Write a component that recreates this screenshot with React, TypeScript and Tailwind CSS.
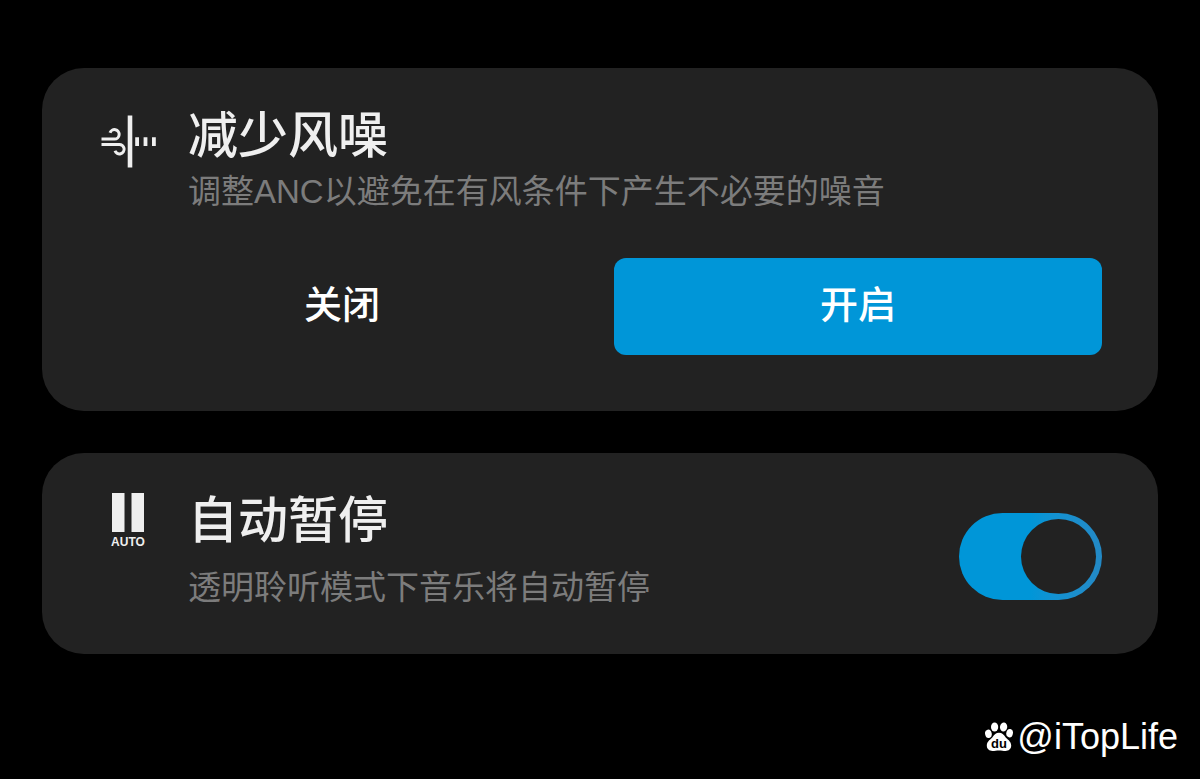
import { useState } from "react";
import type { ReactNode } from "react";

function WindIcon() {
  return (
    <svg viewBox="0 0 60 56" className="h-14 w-15" fill="none" stroke="#efefef" aria-hidden="true">
      <path d="M3.500 26H16.500A4.700 4.700 0 1 0 12 19.800" strokeWidth="3" />
      <path d="M3.500 31.500H21A4.700 4.700 0 1 1 17 37.800" strokeWidth="3" />
      <path d="M32 2.500V54.500" strokeWidth="4.600" />
      <path d="M37.200 28.700H41M45.600 28.700H49.400M54 28.700H57.800" strokeWidth="8.800" />
    </svg>
  );
}

function AutoPauseIcon() {
  return (
    <div className="flex flex-col items-center gap-1" aria-hidden="true">
      <svg viewBox="0 0 33 39" className="h-[39px] w-[33px]" fill="#efefef">
        <rect width="12.5" height="39" />
        <rect x="19.5" width="12.5" height="39" />
      </svg>
      <span className="text-xs leading-3 font-bold">AUTO</span>
    </div>
  );
}

function PawLogo() {
  return (
    <svg viewBox="0 0 28 30" className="h-[30px] w-7" fill="#fff" aria-hidden="true">
      <ellipse cx="9.6" cy="5" rx="3.6" ry="4.6" />
      <ellipse cx="18.6" cy="5" rx="3.6" ry="4.6" transform="rotate(8 18.6 5)" />
      <ellipse cx="3.4" cy="11.8" rx="3.3" ry="4.200" transform="rotate(-12 3.4 11.8)" />
      <ellipse cx="24.600" cy="11.200" rx="3.3" ry="4.200" transform="rotate(12 24.6 11.2)" />
      <path d="M14 10.800c3 0 4.800 1.800 6.200 4 1.600 2.400 6 4.300 6 8.800 0 3.700-2.700 5.400-5.600 5.400-2.300 0-4.100-.6-6.600-.6s-4.300.6-6.600.6c-2.900 0-5.600-1.700-5.600-5.400 0-4.500 4.400-6.400 6-8.800 1.400-2.200 3.200-4 6.200-4z" />
      <text x="14" y="26" textAnchor="middle" fill="#000" className="font-['Liberation_Sans',sans-serif] text-[13px] font-bold">
        du
      </text>
    </svg>
  );
}

function Card({ icon, children }: { icon: ReactNode; children: ReactNode }) {
  return (
    <section className="grid grid-cols-[60px_1fr] gap-x-[30px] rounded-[42px] bg-[#222222] px-14 pt-[38px]">
      <div className="flex justify-center">{icon}</div>
      {children}
    </section>
  );
}

export default function App() {
  const [reduceWind, setReduceWind] = useState(true);
  const [autoPause, setAutoPause] = useState(true);
  const option = "h-[97px] cursor-pointer rounded-xl pb-[3px] text-[38px] font-medium text-white";

  return (
    <div className="flex min-h-screen flex-col bg-black font-['Liberation_Sans','Noto_Sans_CJK_SC',sans-serif] text-[#efefef]">
      <main className="flex flex-col gap-[42px] px-[42px] pt-[68px]">
        <Card icon={<div className="pt-[7px]"><WindIcon /></div>}>
          <div>
            <h2 className="text-[50px] leading-[60px] font-medium">减少风噪</h2>
            <p className="text-[33px] leading-[52px] text-[#7c7c7c]">调整ANC以避免在有风条件下产生不必要的噪音</p>
          </div>
          <div role="group" aria-label="减少风噪" className="col-span-2 mt-10 grid grid-cols-2 gap-7 pb-14">
            <button
              type="button"
              aria-pressed={!reduceWind}
              onClick={() => setReduceWind(false)}
              className={`${option} ${reduceWind ? "" : "bg-[#0096d8]"}`}
            >
              关闭
            </button>
            <button
              type="button"
              aria-pressed={reduceWind}
              onClick={() => setReduceWind(true)}
              className={`${option} ${reduceWind ? "bg-[#0096d8]" : ""}`}
            >
              开启
            </button>
          </div>
        </Card>

        <Card icon={<div className="pt-0.5"><AutoPauseIcon /></div>}>
          <div className="flex items-start justify-between gap-6 pb-10">
            <label htmlFor="auto-pause" className="block">
              <span className="block text-[50px] leading-[60px] font-medium">自动暂停</span>
              <span className="mt-[11px] block text-[33px] leading-[52px] text-[#7c7c7c]">透明聆听模式下音乐将自动暂停</span>
            </label>
            <input
              id="auto-pause"
              type="checkbox"
              role="switch"
              checked={autoPause}
              onChange={(e) => setAutoPause(e.target.checked)}
              className="mt-[22px] flex h-[87px] w-[143px] shrink-0 cursor-pointer appearance-none items-center rounded-full bg-[#555555] p-1.5 before:size-[75px] before:rounded-full before:bg-[#222222] checked:justify-end checked:bg-linear-to-r checked:from-[#0096d8] checked:from-50% checked:to-[#2389c5]"
            />
          </div>
        </Card>
      </main>

      <footer className="mt-auto flex items-center justify-end gap-1 pr-[22px] pb-[22px]">
        <PawLogo />
        <span className="text-[36px] leading-10 text-white">@iTopLife</span>
      </footer>
    </div>
  );
}
